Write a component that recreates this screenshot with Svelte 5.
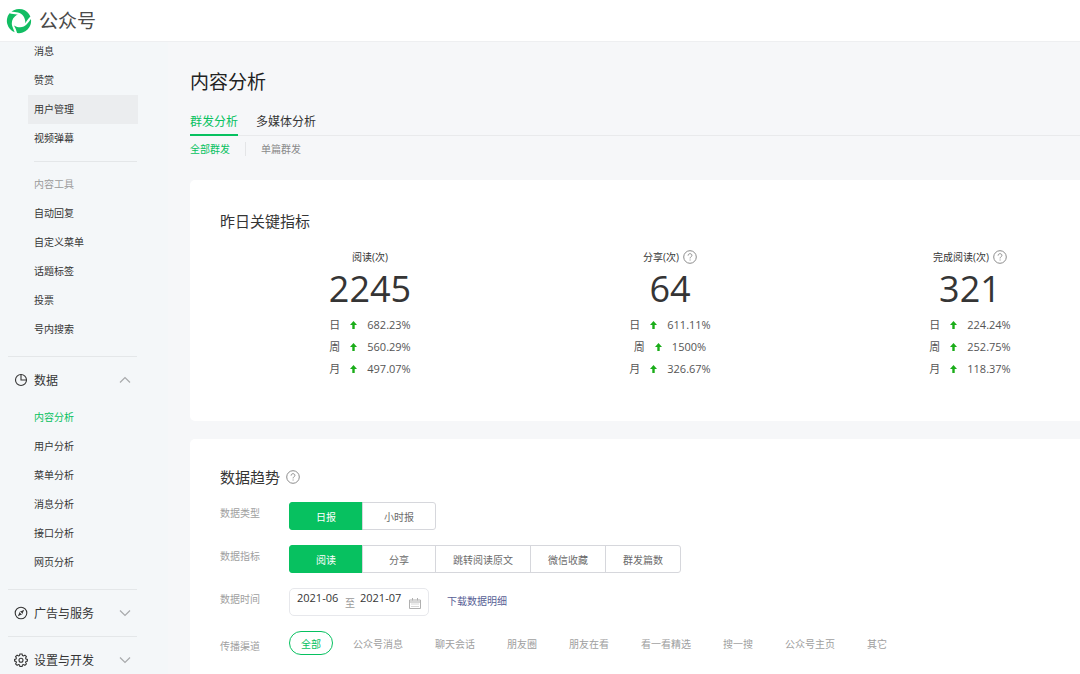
<script lang="ts">
  type Metric = {
    name: string;
    help: boolean;
    value: string;
    changes: { period: string; rate: string }[];
  };

  const messageMenu = ['消息', '赞赏', '用户管理', '视频弹幕'];
  const toolMenu = ['自动回复', '自定义菜单', '话题标签', '投票', '号内搜索'];
  const dataMenu = ['内容分析', '用户分析', '菜单分析', '消息分析', '接口分析', '网页分析'];

  const metrics: Metric[] = [
    {
      name: '阅读(次)',
      help: false,
      value: '2245',
      changes: [
        { period: '日', rate: '682.23%' },
        { period: '周', rate: '560.29%' },
        { period: '月', rate: '497.07%' },
      ],
    },
    {
      name: '分享(次)',
      help: true,
      value: '64',
      changes: [
        { period: '日', rate: '611.11%' },
        { period: '周', rate: '1500%' },
        { period: '月', rate: '326.67%' },
      ],
    },
    {
      name: '完成阅读(次)',
      help: true,
      value: '321',
      changes: [
        { period: '日', rate: '224.24%' },
        { period: '周', rate: '252.75%' },
        { period: '月', rate: '118.37%' },
      ],
    },
  ];

  const dataTypes = ['日报', '小时报'];
  const indicators = ['阅读', '分享', '跳转阅读原文', '微信收藏', '群发篇数'];
  const channels = ['全部', '公众号消息', '聊天会话', '朋友圈', '朋友在看', '看一看精选', '搜一搜', '公众号主页', '其它'];

  let currentPage = $state('内容分析');
  let dataType = $state('日报');
  let indicator = $state('阅读');
  let channel = $state('全部');
  let startMonth = $state('2021-06');
  let endMonth = $state('2021-07');
  let dataOpen = $state(true);
</script>

{#snippet helpIcon()}
  <button class="help" aria-label="说明">
    <svg viewBox="0 0 14 14" width="14" height="14">
      <circle cx="7" cy="7" r="6.3" />
      <path d="M5.1 5.6C5.1 4.4 5.9 3.7 7 3.7s1.9.7 1.9 1.7c0 1.3-1.8 1.5-1.8 3M7.1 9.5v1" />
    </svg>
  </button>
{/snippet}

{#snippet chevron(up: boolean)}
  <svg class="chevron" viewBox="0 0 12 8" width="12" height="8">
    <path d={up ? 'M1 6.5L6 1.5l5 5' : 'M1 1.5l5 5 5-5'} />
  </svg>
{/snippet}

{#snippet menuItem(item: string)}
  <li>
    <a
      href="#{item}"
      class="item"
      class:hovered={item === '用户管理'}
      class:current={item === currentPage}
      onclick={() => (currentPage = item)}>{item}</a>
  </li>
{/snippet}

<div class="app">
  <header>
    <svg class="logo" viewBox="0 0 26 26" width="26" height="26">
      {#each [0, 120, 240] as angle}
        <path
          transform="rotate({angle} 13 13)"
          d="M5.4 3.6A12.2 12.2 0 0 1 24.4 8.6C22.5 10.5 20.5 13 19.4 15.2C19.4 9.4 16.4 5.6 12 4.6C10 4.1 7.6 3.9 5.4 3.6z" />
      {/each}
    </svg>
    <span class="brand">公众号</span>
  </header>

  <div class="body">
    <nav class="sidebar">
      <ul class="scrolled">
        {#each messageMenu as item}
          {@render menuItem(item)}
        {/each}
      </ul>
      <hr class="short" />
      <ul class="tools">
        <li class="item group">内容工具</li>
        {#each toolMenu as item}
          {@render menuItem(item)}
        {/each}
      </ul>
      <hr />
      <button class="section" aria-expanded={dataOpen} onclick={() => (dataOpen = !dataOpen)}>
        <svg class="icon" viewBox="0 0 14 14" width="14" height="14">
          <circle cx="7" cy="7" r="5.5" />
          <path d="M7 1.5V7h5.5" />
        </svg>
        <span>数据</span>
        {@render chevron(dataOpen)}
      </button>
      {#if dataOpen}
        <ul class="tools">
          {#each dataMenu as item}
            {@render menuItem(item)}
          {/each}
        </ul>
      {/if}
      <hr />
      <button class="section">
        <svg class="icon" viewBox="0 0 14 14" width="14" height="14">
          <circle cx="7" cy="7" r="5.8" />
          <path class="solid" d="M10.2 3.8L8.2 8.2 3.8 10.2 5.8 5.8Z" />
          <path class="gap" d="M6.2 6.2l1.6 1.6" />
        </svg>
        <span>广告与服务</span>
        {@render chevron(false)}
      </button>
      <hr />
      <button class="section">
        <svg class="icon" viewBox="0 0 14 14" width="14" height="14">
          <path d="M5.9 1h2.2l.4 1.6 1 .4 1.4-.9 1.5 1.5-.8 1.4.4 1 1.4.4v1.6l-1.4.4-.4 1 .8 1.4-1.5 1.5-1.4-.8-1 .4-.4 1.6H5.9l-.4-1.6-1-.4-1.4.8-1.5-1.5.8-1.4-.4-1L.6 8V6.4l1.4-.4.4-1-.8-1.4 1.5-1.5 1.4.9 1-.4z" />
          <circle cx="7" cy="7.2" r="2" />
        </svg>
        <span>设置与开发</span>
        {@render chevron(false)}
      </button>
    </nav>

    <main>
      <h1>内容分析</h1>
      <div class="tabs">
        <a href="#mass" class="active">群发分析</a>
        <a href="#media">多媒体分析</a>
      </div>
      <div class="subtabs">
        <a href="#all" class="active">全部群发</a>
        <a href="#single">单篇群发</a>
      </div>

      <section class="card summary">
        <h2>昨日关键指标</h2>
        <div class="metrics">
          {#each metrics as metric}
            <div class="metric">
              <div class="name">
                {metric.name}
                {#if metric.help}{@render helpIcon()}{/if}
              </div>
              <div class="value">{metric.value}</div>
              {#each metric.changes as change}
                <div class="change">
                  <span>{change.period}</span>
                  <svg viewBox="0 0 7 8" width="7" height="8">
                    <path d="M3.5 0L7 4H4.7v4H2.3V4H0z" />
                  </svg>
                  <span>{change.rate}</span>
                </div>
              {/each}
            </div>
          {/each}
        </div>
      </section>

      <section class="card trend">
        <h2>数据趋势 {@render helpIcon()}</h2>
        <div class="row">
          <span class="label">数据类型</span>
          <div class="segments">
            {#each dataTypes as type}
              <button class:selected={type === dataType} onclick={() => (dataType = type)}>{type}</button>
            {/each}
          </div>
        </div>
        <div class="row">
          <span class="label">数据指标</span>
          <div class="segments">
            {#each indicators as name}
              <button class:selected={name === indicator} onclick={() => (indicator = name)}>{name}</button>
            {/each}
          </div>
        </div>
        <div class="row">
          <label class="label" for="start-month">数据时间</label>
          <div class="range">
            <input id="start-month" bind:value={startMonth} />
            <span>至</span>
            <input aria-label="结束时间" bind:value={endMonth} />
            <svg viewBox="0 0 12 11" width="12" height="11">
              <path d="M.5 2h11v8.5H.5zM.5 4h11M3.5 0v2.5M8.5 0v2.5" />
              <path class="days" d="M2.5 6h7M2.5 8.5h7" />
            </svg>
          </div>
          <a class="download" href="#download">下载数据明细</a>
        </div>
        <div class="row last">
          <span class="label">传播渠道</span>
          <div class="channels">
            {#each channels as name}
              <button class:selected={name === channel} onclick={() => (channel = name)}>{name}</button>
            {/each}
          </div>
        </div>
      </section>
    </main>
  </div>
</div>

<style>
  :global(body) {
    background: #f6f7f9;
  }

  .app {
    display: flex;
    flex-direction: column;
    height: 100vh;
    overflow: hidden;
    font-family: "Open Sans", "Noto Sans CJK SC", sans-serif;
    font-size: 10px;
    color: #353535;
  }

  button,
  input {
    font: inherit;
    color: inherit;
    margin: 0;
    padding: 0;
    border: none;
    background: none;
  }

  button {
    cursor: pointer;
  }

  a {
    color: inherit;
    text-decoration: none;
  }

  ul {
    list-style: none;
    margin: 0;
    padding: 0;
  }

  header {
    display: flex;
    align-items: center;
    gap: 7px;
    flex: none;
    height: 41px;
    padding-left: 6px;
    background: #fff;
    border-bottom: 1px solid #eeeff1;
    position: relative;
    z-index: 1;
  }

  .logo {
    fill: #12bd63;
  }

  .brand {
    font-size: 19px;
    line-height: 26px;
    color: #4a4a4a;
  }

  .body {
    display: flex;
    flex: 1;
    min-height: 0;
  }

  .sidebar {
    flex: 0 0 168px;
    overflow: hidden;
    background: #f4f7f9;
  }

  /* the menu is scrolled a little under the header */
  .scrolled {
    margin-top: -5px;
  }

  .tools {
    padding-bottom: 12px;
  }

  .item {
    display: block;
    width: 104px;
    margin-left: 28px;
    padding-left: 6px;
    line-height: 29px;
  }

  .hovered {
    background: #ebedef;
  }

  .current {
    color: #07c160;
  }

  .group {
    color: #9a9a9a;
  }

  hr {
    width: 129px;
    height: 1px;
    margin: 0 0 0 8px;
    border: none;
    background: #e4e7e9;
  }

  .short {
    width: 103px;
    margin: 8px 0 8px 34px;
  }

  .section {
    display: flex;
    align-items: center;
    gap: 6px;
    width: 117px;
    height: 46px;
    margin-left: 14px;
    font-size: 12px;
  }

  .icon {
    fill: none;
    stroke: #353535;
    stroke-width: 1.1;
  }

  .solid {
    fill: #353535;
    stroke: none;
  }

  .gap {
    stroke: #f4f7f9;
  }

  .chevron {
    margin-left: auto;
    fill: none;
    stroke: #a8aaac;
    stroke-width: 1.2;
  }

  main {
    flex: 1;
    min-width: 0;
    overflow: hidden;
    padding-left: 22px;
  }

  h1,
  h2 {
    margin: 0;
    font-weight: 400;
  }

  h1 {
    padding-top: 26px;
    font-size: 19px;
    line-height: 28px;
    color: #222;
  }

  .tabs {
    display: flex;
    gap: 18px;
    margin-top: 14px;
    border-bottom: 1px solid #e9eaec;
    font-size: 12px;
    line-height: 24px;
  }

  .tabs .active {
    margin-bottom: -1px;
    border-bottom: 2px solid #07c160;
  }

  .active {
    color: #07c160;
  }

  .subtabs {
    display: flex;
    gap: 15px;
    margin: 6px 0 24px;
    line-height: 14px;
    color: #8a8a8a;
  }

  .subtabs .active {
    padding-right: 15px;
    border-right: 1px solid #e4e5e7;
  }

  .card {
    padding-left: 30px;
    background: #fff;
    border-radius: 5px 0 0 5px;
  }

  h2 {
    display: flex;
    align-items: center;
    gap: 6px;
    font-size: 15px;
    line-height: 28px;
  }

  .summary {
    padding-top: 27px;
    padding-bottom: 41px;
    margin-bottom: 18px;
  }

  .metrics {
    display: grid;
    grid-template-columns: repeat(3, minmax(300px, 1fr));
    margin-top: 15px;
  }

  .metric {
    text-align: center;
  }

  .name {
    display: flex;
    align-items: center;
    justify-content: center;
    gap: 4px;
    line-height: 14px;
  }

  .help {
    display: flex;
  }

  .help svg {
    fill: none;
    stroke: #8c8c8c;
    stroke-width: 1;
  }

  .value {
    font-size: 36px;
    line-height: 50px;
  }

  .change {
    display: flex;
    align-items: center;
    justify-content: center;
    gap: 10px;
    font-size: 11px;
    line-height: 22px;
    color: #555;
  }

  .change svg {
    fill: #1aad19;
  }

  .trend {
    padding-top: 24px;
    height: 100%;
  }

  .trend h2 {
    margin-bottom: 11px;
  }

  .row {
    display: flex;
    margin-bottom: 15px;
  }

  .label {
    flex: 0 0 69px;
    padding-top: 4px;
    line-height: 14px;
    color: #a0a0a0;
  }

  .last .label {
    padding-top: 8px;
  }

  .segments {
    display: flex;
  }

  .segments button {
    min-width: 74px;
    height: 28px;
    padding: 0 17px;
    border: 1px solid #d6d7dc;
    color: #6b6b6b;
    white-space: nowrap;
  }

  .segments button + button {
    margin-left: -1px;
  }

  .segments button:first-child {
    border-radius: 3px 0 0 3px;
  }

  .segments button:last-child {
    border-radius: 0 3px 3px 0;
  }

  .segments .selected {
    background: #07c160;
    border-color: #07c160;
    color: #fff;
  }

  .range {
    display: flex;
    gap: 5px;
    box-sizing: border-box;
    width: 140px;
    height: 28px;
    padding: 0 7px;
    border: 1px solid #e7e8ec;
    border-radius: 5px;
  }

  .range input {
    width: 43px;
    height: 16px;
    font-size: 11px;
    outline: none;
  }

  .range span {
    padding-top: 7px;
    line-height: 14px;
    color: #9a9a9a;
  }

  .range svg {
    margin: 9px 0 0 auto;
    fill: none;
    stroke: #b0b0b0;
  }

  .range .days {
    stroke-dasharray: 1 1;
  }

  .download {
    margin-left: 18px;
    line-height: 26px;
    color: #576095;
  }

  .channels {
    display: flex;
    gap: 8px;
  }

  .channels button {
    height: 24px;
    padding: 0 11px;
    border: 1px solid transparent;
    border-radius: 12px;
    color: #a0a0a0;
    white-space: nowrap;
  }

  .channels .selected {
    border-color: #07c160;
    color: #07c160;
  }
</style>
